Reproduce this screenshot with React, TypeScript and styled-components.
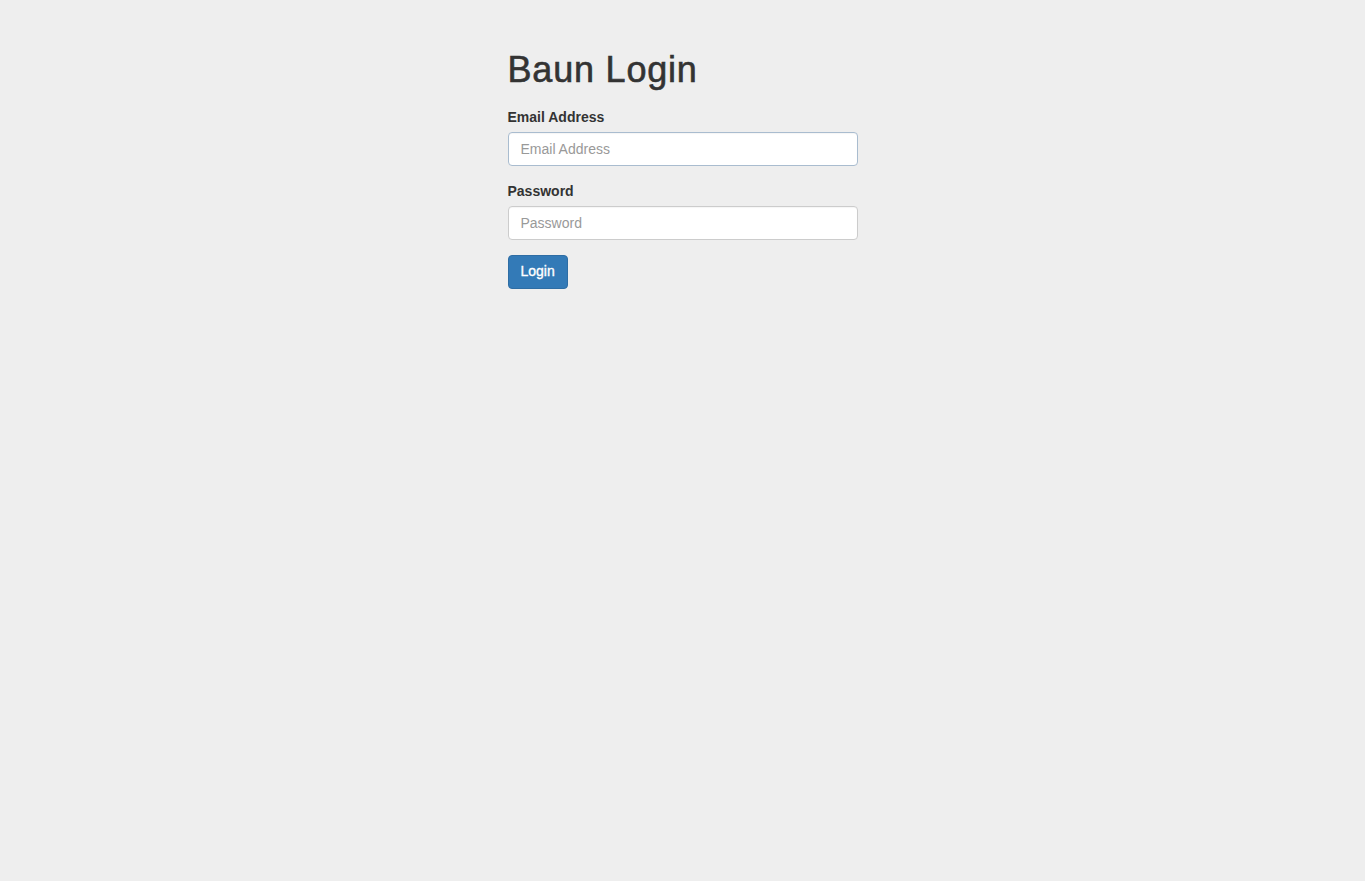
import React from "react";
import styled, { createGlobalStyle } from "styled-components";

const GlobalStyle = createGlobalStyle`
  html, body {
    margin: 0;
    padding: 0;
    background: #eeeeee;
    font-family: "Liberation Sans", Arial, sans-serif;
    font-size: 14px;
    line-height: 1.42857;
    color: #333333;
  }
  * { box-sizing: border-box; }
`;

const Page = styled.div`
  min-height: 881px;
  background: #eeeeee;
  padding-top: 50px;
`;

const Container = styled.div`
  width: 350px;
  margin: 0 auto;
`;

const Title = styled.h1`
  font-size: 36px;
  font-weight: 400;
  line-height: 1.1;
  margin: 0 0 17px;
  color: #333333;
  letter-spacing: 0.8px;
  -webkit-text-stroke: 0.6px #333333;
`;

const FormGroup = styled.div`
  margin-bottom: 15px;
`;

const Label = styled.label`
  display: block;
  font-weight: bold;
  font-size: 14px;
  line-height: 20px;
  margin-bottom: 5px;
`;

const Input = styled.input<{ $focused?: boolean }>`
  display: block;
  width: 100%;
  height: 34px;
  padding: 6px 12px;
  font-family: "Liberation Sans", Arial, sans-serif;
  font-size: 14px;
  line-height: 1.42857;
  color: #555555;
  background: #ffffff;
  border: 1px solid ${(p) => (p.$focused ? "#a9bccf" : "#cccccc")};
  border-radius: 4px;
  box-shadow: inset 0 1px 1px rgba(0, 0, 0, 0.04);
  outline: none;
  caret-color: #333333;
  &::placeholder {
    color: #999999;
  }
`;

const Button = styled.button`
  display: inline-block;
  height: 34px;
  padding: 6px 12px;
  font-family: "Liberation Sans", Arial, sans-serif;
  font-size: 14px;
  font-weight: 400;
  line-height: 1.42857;
  color: #ffffff;
  -webkit-text-stroke: 0.35px #ffffff;
  background: #337ab7;
  border: 1px solid #2e6da4;
  border-radius: 4px;
  cursor: pointer;
`;

export default function App() {
  return (
    <>
      <GlobalStyle />
      <Page>
        <Container>
          <Title>Baun Login</Title>
          <form onSubmit={(e) => e.preventDefault()}>
            <FormGroup>
              <Label htmlFor="email">Email Address</Label>
              <Input id="email" type="email" placeholder="Email Address" $focused autoFocus />
            </FormGroup>
            <FormGroup>
              <Label htmlFor="password">Password</Label>
              <Input id="password" type="password" placeholder="Password" />
            </FormGroup>
            <Button type="submit">Login</Button>
          </form>
        </Container>
      </Page>
    </>
  );
}
